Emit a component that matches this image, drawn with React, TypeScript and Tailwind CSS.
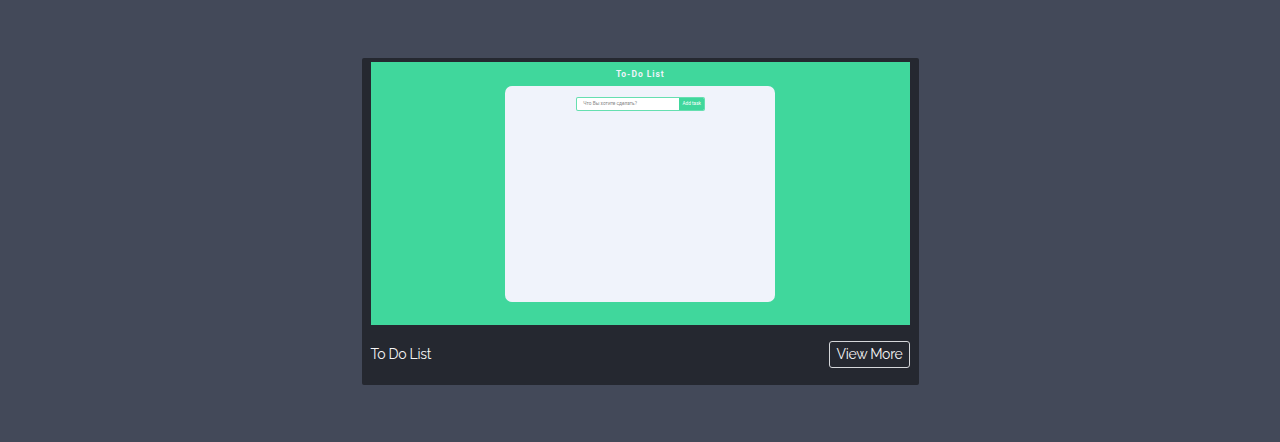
export default function App() {
  return (
    <main className="flex h-[442px] w-full justify-center bg-[#434959] pt-[58px]">
      <article className="flex h-[326.5px] w-[557px] flex-col rounded-[2px] bg-[#252830] pt-[4px] pr-[8.5px] pl-[9px]">
        <div className="flex h-[263px] w-full flex-col items-center bg-[#40d79c] font-['Roboto',sans-serif]">
          <h1 className="flex h-[24px] items-center text-[8.5px] font-bold tracking-[0.95px] text-[#f0f3fb]">To-Do List</h1>
          <div className="flex h-[215.5px] w-[270px] items-start justify-center rounded-[7px] bg-[#f0f3fb] pt-[11px]">
            <div className="ml-px flex h-[13.5px] w-[129px] overflow-hidden rounded-[2px] border border-[#40d79c]/80 bg-white text-[4.8px]">
              <span className="flex flex-1 items-center pl-[6px] text-[#888]">Что Вы хотите сделать?</span>
              <span className="flex w-[25px] items-center justify-center bg-[#40d79c] pt-[0.5px] text-[4.7px] text-white">Add task</span>
            </div>
          </div>
        </div>
        <div className="flex flex-1 items-center justify-between font-['Raleway','Lato',sans-serif] font-[450] tracking-[-0.28px] text-[#f5f5f5]">
          <h2 className="text-[14px]">To Do List</h2>
          <button className="h-[27px] w-[81px] rounded-[3px] border border-[#d5d7da] text-[14px]">View More</button>
        </div>
      </article>
    </main>
  );
}
